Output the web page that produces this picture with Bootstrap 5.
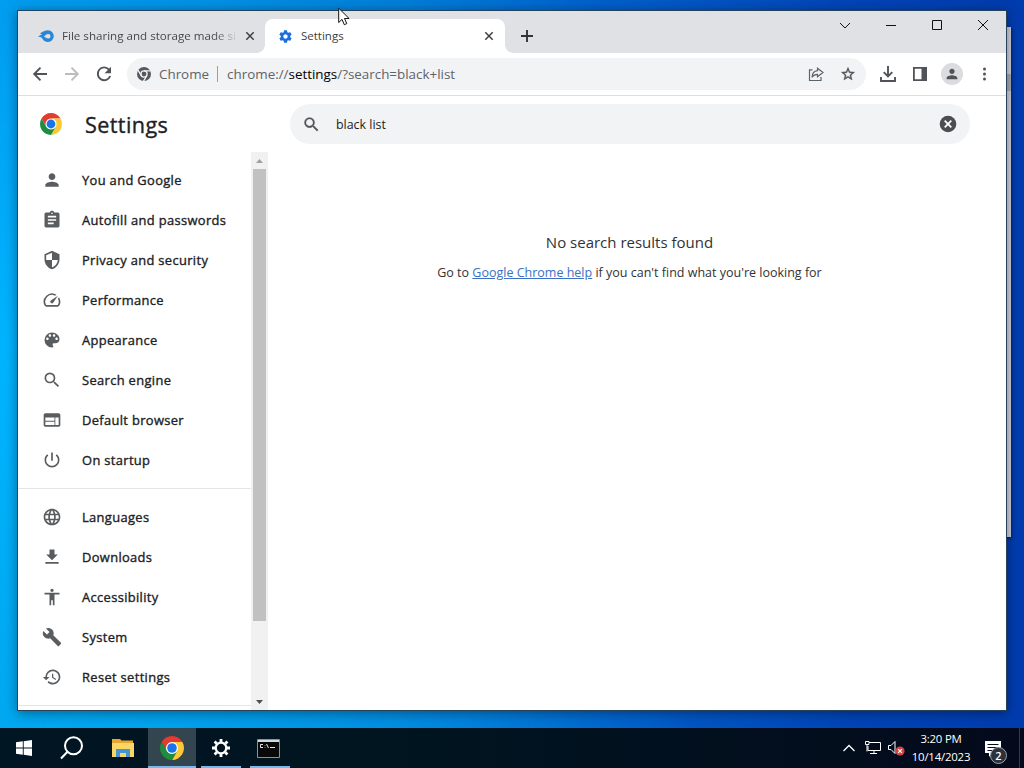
<!DOCTYPE html>
<html lang="en">
<head>
  <meta charset="UTF-8">
  <title>Settings</title>
  <meta name="viewport" content="width=device-width, initial-scale=1.0">
  <!-- Bootstrap CDN -->
  <link href="https://cdn.jsdelivr.net/npm/bootstrap@5.3.0/dist/css/bootstrap.min.css" rel="stylesheet">
  <style>
    body {
      width: 1024px;
      height: 768px;
      font-family: "Open Sans", "Noto Sans", sans-serif;
      font-size: 12.3px;
      line-height: 20px;
      color: #202124;
    }
    svg { display: block; flex: none; }
    .desktop {
      background: linear-gradient(90deg, #009df0 0, #0090e4 220px, #007fd9 400px, #0060cb 600px, #0044b6 850px, #003bae 1024px);
    }
    .desktop-glow {
      left: 0; top: 0; width: 700px; height: 728px;
      background: linear-gradient(180deg, rgba(0,178,255,0) 0, rgba(0,182,255,.9) 350px, rgba(0,172,240,.7) 100%);
      -webkit-mask-image: linear-gradient(90deg, #000, transparent);
      mask-image: linear-gradient(90deg, #000, transparent);
    }
    .back-window {
      left: 980px; top: 27px; width: 31px; height: 510px;
      background: #ced0dc;
      box-shadow: 0 1px 3px rgba(0,0,0,.7);
    }
    .back-window div { margin-top: 47px; height: 17px; background: #a9abb4; }
    .browser {
      left: 17px; top: 10px; width: 990px; height: 701px;
      border: 1px solid #24425c;
      box-shadow: 0 2px 11px rgba(0,0,0,.4);
    }
    .tab-strip { height: 42px; background: #dfe1e5; }
    .tab-idle { width: 247px; height: 34px; padding: 0 8px 0 20px; }
    .tab-idle-text {
      width: 175px;
      margin-left: 8px;
      margin-right: 8px;
      font-size: 11.6px;
      color: #45494d;
      -webkit-mask-image: linear-gradient(90deg, #000 152px, transparent 177px);
      mask-image: linear-gradient(90deg, #000 152px, transparent 177px);
    }
    .tab-active {
      width: 240px; height: 34px; padding: 0 11px 0 13px;
      background: #fff;
      border-radius: 8px 8px 0 0;
      font-size: 11.5px;
      color: #3c4043;
    }
    .tab-active::before, .tab-active::after {
      content: "";
      position: absolute;
      bottom: 0;
      width: 8px;
      height: 8px;
    }
    .tab-active::before { left: -8px; background: radial-gradient(circle at 0 0, transparent 7.5px, #fff 8px); }
    .tab-active::after { right: -8px; background: radial-gradient(circle at 100% 0, transparent 7.5px, #fff 8px); }
    .win-buttons { margin-right: 16px; margin-top: 7px; gap: 32px; }
    .toolbar { height: 43px; border-bottom: 1px solid #dcdee1; padding: 0 13px 1px 14px; }
    .omnibox {
      width: 739px; height: 32px; margin-left: 15px; padding: 0 10px;
      background: #f1f3f4;
      border-radius: 16px;
      font-size: 13.4px;
      color: #5f6368;
    }
    .omnibox-bar { width: 1px; height: 16px; background: #9aa0a6; margin: 0 9px 0 8px; }
    .avatar { width: 22px; height: 22px; background: #dadce0; }
    .page-head { height: 56px; padding-left: 22px; }
    .page-title { font-size: 21.6px; -webkit-text-stroke: .35px; line-height: 28px; width: 205px; margin-left: 23px; letter-spacing: .4px; padding-top: 2px; }
    .search-field { width: 680px; height: 40px; border-radius: 20px; background: #f1f3f4; padding: 0 13px 0 12px; font-size: 12.4px; }
    .search-field span { margin-left: 15px; padding-top: 1px; }
    .side-menu { width: 233px; padding-top: 8px; }
    .menu-row { height: 40px; padding-left: 24px; font-size: 12.9px; -webkit-text-stroke: .35px; letter-spacing: .35px; color: #202124; }
    .menu-row svg { margin-right: 20px; fill: #5a5d60; width: 20px; height: 20px; -webkit-text-stroke: 0; }
    .menu-line { height: 1px; margin: 8px 0; background: #e3e5e8; }
    .scroll-track { width: 17px; background: #f1f1f1; padding: 0 2px; }
    .scroll-end { height: 17px; }
    .scroll-thumb { height: 452px; background: #c1c1c1; }
    .result-box { width: 723px; padding-top: 79px; font-size: 12.5px; color: #303236; }
    .result-title { font-size: 15px; line-height: 22px; margin-bottom: 10px; }
    .result-box a { color: #3c6fc4; }
    .task-bar { left: 0; top: 728px; width: 1024px; height: 40px; background: linear-gradient(90deg, #001622, #001420 450px, #040a1b); color: #fff; }
    .task-btn { width: 48px; height: 40px; margin-right: 1px; }
    .task-start { margin-right: 0; }
    .task-search { width: 50px; padding-right: 2px; }
    .task-open::after { content: ""; position: absolute; left: 4px; right: 4px; bottom: 0; height: 2px; background: #76b9ed; }
    .task-current { background: #33454f; }
    .task-current::after { left: 0; right: 0; }
    .clock { width: 62px; font-size: 11.4px; line-height: 18px; letter-spacing: -.2px; margin: 0 12px 0 5px; }
    .note-box { margin-right: 18px; }
    .peek-line { width: 1px; height: 40px; margin-right: 4px; background: #343b48; }
    .note-count {
      left: 6px; top: 7px; width: 17px; height: 17px;
      background: #2c313d;
      border: 1px solid #9da2ab;
      font-size: 11px;
      line-height: 15px;
      font-weight: 600;
    }
    .pointer { left: 338px; top: 7px; }
  </style>
</head>
<body class="overflow-hidden">

<svg width="0" height="0" class="position-absolute">
  <defs>
    <symbol id="chrome" viewBox="0 0 48 48">
      <circle cx="24" cy="24" r="13" fill="#fff"/>
      <path fill="#e33b2e" d="M24 12h20.78A24 24 0 0 0 3.22 12l10.39 18A12 12 0 0 1 24 12z"/>
      <path fill="#fcc934" d="M34.39 30 24 48a24 24 0 0 0 20.78-36H24a12 12 0 0 1 10.39 18z"/>
      <path fill="#1e8e3e" d="M13.61 30 3.22 12A24 24 0 0 0 24 48l10.39-18a12 12 0 0 1-20.78 0z"/>
      <circle cx="24" cy="24" r="9.6" fill="#1a73e8"/>
    </symbol>
    <symbol id="close" viewBox="0 0 10 10"><path d="M1.300 1.300l7.400 7.400M8.700 1.300L1.300 8.700" stroke="#3c4043" stroke-width="1.500"/></symbol>
    <symbol id="lens" viewBox="0 0 24 24"><path d="M15.5 14h-.79l-.28-.27A6.47 6.47 0 0 0 16 9.5 6.5 6.5 0 1 0 9.5 16c1.61 0 3.09-.59 4.23-1.57l.27.28v.79l5 4.99L20.49 19l-4.99-5zm-6 0C7.01 14 5 11.99 5 9.5S7.01 5 9.5 5 14 7.01 14 9.5 11.99 14 9.5 14z"/></symbol>
    <symbol id="person" viewBox="0 0 24 24"><path d="M12 12c2.21 0 4-1.79 4-4s-1.79-4-4-4-4 1.79-4 4 1.79 4 4 4zm0 2c-2.67 0-8 1.34-8 4v2h16v-2c0-2.66-5.33-4-8-4z"/></symbol>
    <symbol id="gear" viewBox="0 0 24 24"><path d="M19.43 12.98c.04-.32.07-.64.07-.98s-.03-.66-.07-.98l2.11-1.65c.19-.15.24-.42.12-.64l-2-3.46c-.12-.22-.39-.3-.61-.22l-2.49 1c-.52-.4-1.08-.73-1.69-.98l-.38-2.65C14.46 2.18 14.25 2 14 2h-4c-.25 0-.46.18-.49.42l-.38 2.65c-.61.25-1.17.59-1.69.98l-2.49-1c-.23-.09-.49 0-.61.22l-2 3.46c-.13.22-.07.49.12.64l2.11 1.65c-.04.32-.07.65-.07.98s.03.66.07.98l-2.11 1.65c-.19.15-.24.42-.12.64l2 3.46c.12.22.39.3.61.22l2.49-1c.52.4 1.08.73 1.69.98l.38 2.65c.03.24.24.42.49.42h4c.25 0 .46-.18.49-.42l.38-2.65c.61-.25 1.17-.59 1.69-.98l2.49 1c.23.09.49 0 .61-.22l2-3.46c.12-.22.07-.49-.12-.64l-2.11-1.65zM12 15.5c-1.93 0-3.5-1.57-3.5-3.5s1.57-3.5 3.5-3.5 3.5 1.57 3.5 3.5-1.57 3.5-3.5 3.5z"/></symbol>
  </defs>
</svg>

<div class="desktop position-relative w-100 h-100 overflow-hidden">
  <div class="desktop-glow position-absolute"></div>
  <div class="back-window position-absolute overflow-hidden"><div></div></div>

  <div class="browser position-absolute bg-white d-flex flex-column">
    <!-- Tabs -->
    <div class="tab-strip d-flex align-items-end">
      <div class="tab-idle d-flex align-items-center">
        <svg width="16" height="16" viewBox="0 0 16 16">
          <path fill="#2c86d8" d="M0 8.800C1.500 7.300 3 6.800 4.200 6.500L2 5.600C4.300 3.600 7 2.300 10 2.300A5.800 5.800 0 0 1 10 13.900C7.300 13.900 5.200 12.600 4.300 10.400 3 9.200 1.500 8.800 0 8.800z"/>
          <path fill="#dfe1e5" d="M6 8.700C7.300 7.600 8 6 10.300 6a2.200 2.200 0 0 1 0 4.400C8.400 10.400 7.600 9.300 6 8.700z"/>
        </svg>
        <div class="tab-idle-text text-nowrap">File sharing and storage made si</div>
        <svg width="10" height="10"><use href="#close"/></svg>
      </div>
      <div class="tab-active position-relative d-flex align-items-center">
        <svg width="15" height="15" fill="#1a6fdc"><use href="#gear"/></svg>
        <span class="ms-2 flex-grow-1">Settings</span>
        <svg width="10" height="10"><use href="#close"/></svg>
      </div>
      <svg class="ms-3 mb-2" width="12" height="18" viewBox="0 0 12 18"><path d="M0 9h12M6 3v12" stroke="#303338" stroke-width="1.900"/></svg>
      <div class="win-buttons d-flex ms-auto align-self-start">
        <svg width="14" height="14" viewBox="0 0 14 14" fill="none" stroke="#111"><path d="M2 5l5 5 5-5"/></svg>
        <svg width="14" height="14" viewBox="0 0 14 14" fill="none" stroke="#111"><path d="M2 7.500h10"/></svg>
        <svg width="14" height="14" viewBox="0 0 14 14" fill="none" stroke="#111"><path d="M2.500 2.500h9v9h-9z"/></svg>
        <svg width="14" height="14" viewBox="0 0 14 14" fill="none" stroke="#111"><path d="M2 2l10 10M12 2L2 12"/></svg>
      </div>
    </div>

    <!-- Address bar -->
    <div class="toolbar d-flex align-items-center">
      <svg width="16" height="16" viewBox="0 0 16 16" fill="none" stroke="#505357" stroke-width="1.900"><path d="M15 8H2.500M8.500 1.700L2.200 8l6.300 6.300"/></svg>
      <svg class="ms-3" width="16" height="16" viewBox="0 0 16 16" fill="none" stroke="#babcbe" stroke-width="1.900"><path d="M1 8h12.500M7.500 1.700L13.800 8l-6.300 6.300"/></svg>
      <svg class="ms-3" width="16" height="16" viewBox="0 0 16 16"><path d="M13 3.600A6.400 6.400 0 1 0 14.200 10" fill="none" stroke="#505357" stroke-width="1.900"/><path d="M15 .8v6.400H8.600z" fill="#505357"/></svg>
      <div class="omnibox d-flex align-items-center">
        <svg width="14" height="14" viewBox="0 0 48 48" fill="none">
          <circle cx="24" cy="24" r="24" fill="#55595d"/>
          <circle cx="24" cy="24" r="10.500" stroke="#f1f3f4" stroke-width="4.500"/>
          <path d="M24 13h22M14.500 29.500L3.500 10.500M33.500 29.500L22.500 48.500" stroke="#f1f3f4" stroke-width="4.500"/>
        </svg>
        <span class="ms-2">Chrome</span>
        <div class="omnibox-bar"></div>
        <span>chrome://<span class="text-black">settings</span>/?search=black+list</span>
        <svg class="ms-auto" width="16" height="16" viewBox="0 0 16 16" fill="none" stroke="#5f6368" stroke-width="1.200"><path d="M4.500 3.800H1.500v10.700h11.500V11M9.500 2.300L15 6.600l-5.500 4.200V8.300C7 8.300 5.200 9.300 4 11.300c.2-3.600 2-6.200 5.500-6.600z"/></svg>
        <svg class="ms-3" width="16" height="16" viewBox="0 0 24 24" fill="#505357"><path d="M22 9.240l-7.190-.62L12 2 9.190 8.630 2 9.240l5.460 4.730L5.820 21 12 17.270 18.180 21l-1.630-7.030L22 9.240zM12 15.400l-3.760 2.270 1-4.280-3.320-2.880 4.380-.38L12 6.100l1.710 4.040 4.380.38-3.320 2.880 1 4.280L12 15.400z" stroke="#505357" stroke-width=".6"/></svg>
      </div>
      <svg class="ms-auto" width="16" height="16" viewBox="0 0 16 16" fill="none" stroke="#505357" stroke-width="1.900"><path d="M8 0v10M3.700 6.200L8 10.500l4.300-4.300M1 11v4h14v-4"/></svg>
      <svg class="ms-3" width="16" height="16" viewBox="0 0 16 16"><path d="M1.900 1.900h12.200v12.200H1.900z" fill="none" stroke="#505357" stroke-width="1.800"/><path d="M9.500 1H15v14H9.500z" fill="#505357"/></svg>
      <div class="avatar rounded-circle d-flex align-items-center justify-content-center mx-auto">
        <svg width="16" height="16" fill="#505357"><use href="#person"/></svg>
      </div>
      <svg width="16" height="16" viewBox="0 0 16 16" fill="#505357"><circle cx="7.500" cy="3" r="1.500"/><circle cx="7.500" cy="8" r="1.500"/><circle cx="7.500" cy="13" r="1.500"/></svg>
    </div>

    <!-- Settings page -->
    <div class="page-head d-flex align-items-center">
      <svg width="22" height="22"><use href="#chrome"/></svg>
      <div class="page-title">Settings</div>
      <div class="search-field d-flex align-items-center">
        <svg width="19" height="19" fill="#505357" stroke="#505357" stroke-width=".3"><use href="#lens"/></svg>
        <span class="flex-grow-1">black list</span>
        <svg width="18" height="18" viewBox="0 0 18 18"><circle cx="9" cy="9" r="8.300" fill="#4b4f53"/><path d="M5.700 5.700l6.600 6.600M12.300 5.700l-6.600 6.600" stroke="#fff" stroke-width="1.800"/></svg>
      </div>
    </div>

    <div class="d-flex flex-grow-1">
      <div class="side-menu">
        <div class="menu-row d-flex align-items-center"><svg><use href="#person"/></svg>You and Google</div>
        <div class="menu-row d-flex align-items-center"><svg viewBox="0 0 24 24"><path d="M19 3h-4.180C14.400 1.840 13.300 1 12 1s-2.400.84-2.820 2H5c-1.100 0-2 .9-2 2v14c0 1.100.9 2 2 2h14c1.100 0 2-.9 2-2V5c0-1.100-.9-2-2-2zm-7 0c.55 0 1 .45 1 1s-.45 1-1 1-1-.45-1-1 .45-1 1-1zm2 14H7v-2h7v2zm3-4H7v-2h10v2zm0-4H7V7h10v2z"/></svg>Autofill and passwords</div>
        <div class="menu-row d-flex align-items-center"><svg viewBox="0 0 24 24"><path d="M12 1L3 5v6c0 5.550 3.840 10.740 9 12 5.160-1.260 9-6.450 9-12V5l-9-4zm0 10.990h7c-.53 4.120-3.280 7.790-7 8.940V12H5V6.300l7-3.110v8.800z"/></svg>Privacy and security</div>
        <div class="menu-row d-flex align-items-center"><svg viewBox="0 0 24 24"><path d="M20.380 8.570l-1.230 1.850a8 8 0 0 1-.22 7.580H5.070A8 8 0 0 1 15.580 6.850l1.850-1.230A10 10 0 0 0 3.350 19a2 2 0 0 0 1.720 1h13.850a2 2 0 0 0 1.740-1 10 10 0 0 0-.27-10.440zM10.590 15.410a2 2 0 0 0 2.830 0l5.660-8.490-8.490 5.660a2 2 0 0 0 0 2.830z"/></svg>Performance</div>
        <div class="menu-row d-flex align-items-center"><svg viewBox="0 0 24 24"><path d="M12 3a9 9 0 0 0 0 18c.83 0 1.500-.67 1.500-1.500 0-.39-.15-.74-.39-1.010-.23-.26-.38-.61-.38-.99 0-.83.67-1.500 1.500-1.500H16c2.760 0 5-2.240 5-5 0-4.420-4.030-8-9-8zm-5.500 9c-.83 0-1.500-.67-1.500-1.500S5.670 9 6.500 9 8 9.670 8 10.500 7.330 12 6.500 12zm3-4C8.670 8 8 7.330 8 6.500S8.670 5 9.500 5s1.500.67 1.500 1.500S10.330 8 9.500 8zm5 0c-.83 0-1.500-.67-1.500-1.500S13.670 5 14.500 5s1.500.67 1.500 1.500S15.330 8 14.500 8zm3 4c-.83 0-1.500-.67-1.500-1.500S16.670 9 17.500 9s1.500.67 1.500 1.500-.67 1.500-1.500 1.500z"/></svg>Appearance</div>
        <div class="menu-row d-flex align-items-center"><svg><use href="#lens"/></svg>Search engine</div>
        <div class="menu-row d-flex align-items-center"><svg viewBox="0 0 24 24"><path d="M20 4H4c-1.100 0-1.990.9-1.990 2L2 18c0 1.100.9 2 2 2h16c1.100 0 2-.9 2-2V6c0-1.100-.9-2-2-2zm-5 14H4v-4h11v4zm0-5H4V9h11v4zm5 5h-4V9h4v9z"/></svg>Default browser</div>
        <div class="menu-row d-flex align-items-center"><svg viewBox="0 0 24 24"><path d="M13 3h-2v10h2V3zm4.830 2.170l-1.420 1.420C17.990 7.860 19 9.810 19 12c0 3.870-3.130 7-7 7s-7-3.130-7-7c0-2.190 1.010-4.140 2.580-5.420L6.170 5.170C4.230 6.820 3 9.260 3 12a9 9 0 0 0 18 0c0-2.740-1.230-5.180-3.170-6.830z"/></svg>On startup</div>
        <div class="menu-line"></div>
        <div class="menu-row d-flex align-items-center"><svg viewBox="0 0 24 24"><path d="M11.990 2C6.470 2 2 6.480 2 12s4.470 10 9.990 10C17.520 22 22 17.520 22 12S17.520 2 11.990 2zm6.930 6h-2.950c-.32-1.250-.78-2.450-1.380-3.560 1.840.63 3.370 1.910 4.330 3.560zM12 4.040c.83 1.200 1.480 2.530 1.910 3.960h-3.820c.43-1.430 1.080-2.760 1.910-3.960zM4.260 14C4.100 13.360 4 12.690 4 12s.1-1.360.26-2h3.380c-.08.66-.14 1.320-.14 2s.06 1.340.14 2H4.260zm.82 2h2.950c.32 1.250.78 2.450 1.380 3.560-1.840-.63-3.370-1.900-4.330-3.560zm2.950-8H5.080c.96-1.660 2.490-2.930 4.330-3.560C8.810 5.550 8.350 6.750 8.030 8zM12 19.960c-.83-1.200-1.480-2.530-1.910-3.960h3.820c-.43 1.430-1.080 2.760-1.910 3.960zM14.340 14H9.660c-.09-.66-.16-1.320-.16-2s.07-1.350.16-2h4.680c.09.65.16 1.320.16 2s-.07 1.340-.16 2zm.25 5.560c.6-1.110 1.060-2.310 1.380-3.560h2.950c-.96 1.650-2.490 2.930-4.330 3.560zM16.360 14c.08-.66.14-1.320.14-2s-.06-1.340-.14-2h3.380c.16.64.26 1.310.26 2s-.1 1.360-.26 2h-3.380z"/></svg>Languages</div>
        <div class="menu-row d-flex align-items-center"><svg viewBox="0 0 24 24"><path d="M19 9h-4V3H9v6H5l7 7 7-7zM4 18v2h16v-2H4z"/></svg>Downloads</div>
        <div class="menu-row d-flex align-items-center"><svg viewBox="0 0 24 24"><path d="M12 2c1.100 0 2 .9 2 2s-.9 2-2 2-2-.9-2-2 .9-2 2-2zm9 7h-6v13h-2v-6h-2v6H9V9H3V7h18v2z"/></svg>Accessibility</div>
        <div class="menu-row d-flex align-items-center"><svg viewBox="0 0 24 24"><path d="M22.700 19l-9.100-9.100c.9-2.300.4-5-1.500-6.900-2-2-5-2.400-7.400-1.300L9 6 6 9 1.600 4.700C.4 7.100.9 10.100 2.900 12.100c1.900 1.900 4.600 2.400 6.900 1.500l9.100 9.100c.4.4 1 .4 1.400 0l2.300-2.300c.5-.4.5-1.100.1-1.400z"/></svg>System</div>
        <div class="menu-row d-flex align-items-center"><svg viewBox="0 0 24 24"><path d="M13 3a9 9 0 0 0-9 9H1l3.890 3.890.07.14L9 12H6c0-3.870 3.130-7 7-7s7 3.130 7 7-3.130 7-7 7c-1.930 0-3.680-.79-4.940-2.060l-1.420 1.420A9 9 0 1 0 13 3zm-1 5v5l4.280 2.540.72-1.210-3.500-2.080V8H12z"/></svg>Reset settings</div>
        <div class="menu-line mb-0"></div>
      </div>
      <div class="scroll-track d-flex flex-column">
        <div class="scroll-end d-flex align-items-center justify-content-center"><svg width="7" height="4" viewBox="0 0 7 4"><path d="M0 4l3.500-4L7 4z" fill="#a0a0a0"/></svg></div>
        <div class="scroll-thumb"></div>
        <div class="scroll-end mt-auto d-flex align-items-center justify-content-center"><svg width="7" height="4" viewBox="0 0 7 4"><path d="M0 0l3.500 4L7 0z" fill="#505050"/></svg></div>
      </div>
      <div class="result-box text-center text-nowrap">
        <div class="result-title">No search results found</div>
        <div>Go to <a href="#">Google Chrome help</a> if you can't find what you're looking for</div>
      </div>
    </div>
  </div>

  <!-- Taskbar -->
  <div class="task-bar position-absolute d-flex align-items-center">
    <div class="task-btn task-start d-flex align-items-center justify-content-center">
      <svg width="16" height="16" viewBox="0 0 16 16" fill="#fff"><path d="M0 2.300L6.800 1.300v6.300H0zM7.700 1.200L16 0v7.600H7.700zM0 8.400h6.800v6.400L0 13.800zM7.700 8.400H16V16l-8.300-1.200z"/></svg>
    </div>
    <div class="task-btn task-search d-flex align-items-center justify-content-center">
      <svg width="24" height="24" viewBox="0 0 24 24" fill="none" stroke="#fff" stroke-width="2"><circle cx="13.500" cy="9.800" r="8.500"/><path d="M7.500 15.800L1 22.500"/></svg>
    </div>
    <div class="task-btn d-flex align-items-center justify-content-center">
      <svg width="22" height="20" viewBox="0 0 22 20"><path d="M0 1h8l1.500 1.500H21V19H0z" fill="#e5a72e"/><path d="M0 5h22v14H0z" fill="#fbd667"/><path d="M4 19v-8h14v8h-4v-4H8v4z" fill="#4297d2"/></svg>
    </div>
    <div class="task-btn task-open task-current position-relative d-flex align-items-center justify-content-center">
      <svg width="24" height="24"><use href="#chrome"/></svg>
    </div>
    <div class="task-btn task-open position-relative d-flex align-items-center justify-content-center">
      <svg width="20" height="20" viewBox="0 0 20 20" fill="none" stroke="#fff"><circle cx="10" cy="10" r="5.300" stroke-width="2.300"/><path d="M10 1v3M10 16v3M1 10h3M16 10h3M3.600 3.600l2.200 2.200M14.200 14.200l2.200 2.200M3.600 16.400l2.200-2.200M14.200 5.800l2.200-2.200" stroke-width="2.800"/></svg>
    </div>
    <div class="task-btn task-open position-relative d-flex align-items-center justify-content-center">
      <svg class="me-1" width="23" height="19" viewBox="0 0 23 19"><path d="M.5.500h22v18H.5z" fill="#090909" stroke="#8d9297"/><path d="M1 1h21v2H1z" fill="#d5d8db"/><path d="M6 5.500H3.500v3H6M8 6v.5M8 8v.5M9.500 5l2 4M13 8.500h5" stroke="#e5e5e5" fill="none"/></svg>
    </div>
    <div class="d-flex align-items-center ms-auto">
      <svg width="14" height="14" viewBox="0 0 14 14" fill="none" stroke="#fff" stroke-width="1.300"><path d="M1.500 10L7 4.500l5.500 5.500"/></svg>
      <svg class="ms-2" width="18" height="16" viewBox="0 0 18 16" fill="none" stroke="#fff"><path d="M5 2.500h11.500v8H4V6M10 10.500v3M6 13.500h7M1.500 1.500h3.500v3H1.500zM3 4.500v7"/></svg>
      <svg class="ms-1" width="19" height="16" viewBox="0 0 19 16" fill="none" stroke="#fff"><path d="M2.500 5.500h2.500l4-4v12l-4-4H2.500z"/><circle cx="14" cy="11" r="4.600" fill="#d3423f" stroke="none"/><path d="M12.100 9.100l3.800 3.800M15.900 9.100l-3.800 3.800" stroke-width="1.200"/></svg>
      <div class="clock text-center text-nowrap">3:20 PM<br>10/14/2023</div>
      <div class="note-box position-relative">
        <svg width="17" height="17" viewBox="0 0 17 17"><path d="M1 1h16v12H8l-3 4v-4H1z" fill="#fff"/><path d="M3.500 4.500h11M3.500 7.500h11M3.500 10.500h7" stroke="#080d1d"/></svg>
        <div class="note-count position-absolute rounded-circle text-center">2</div>
      </div>
      <div class="peek-line"></div>
    </div>
  </div>

  <svg class="pointer position-absolute" width="13" height="20" viewBox="0 0 13 20"><path d="M.7 1.200v14.300l3.300-3.100 2.300 5.300 2.500-1.100-2.300-5.100h4.600z" fill="#fff" stroke="#111"/></svg>
</div>

<script src="https://cdn.jsdelivr.net/npm/bootstrap@5.3.0/dist/js/bootstrap.bundle.min.js"></script>
</body>
</html>
